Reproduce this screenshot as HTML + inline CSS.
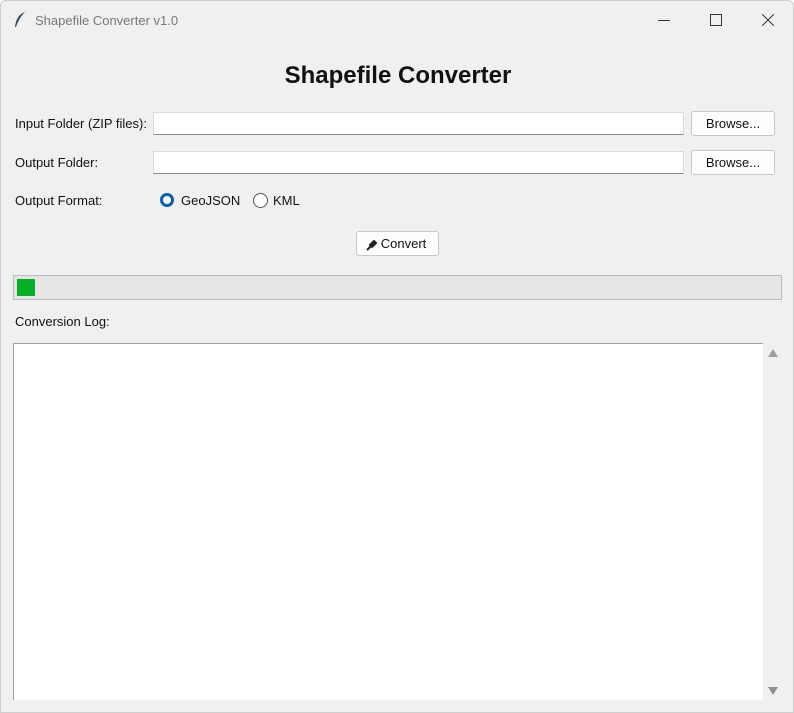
<!DOCTYPE html>
<html><head><meta charset="utf-8"><style>
body{margin:0;width:794px;height:713px;background:#fff;overflow:hidden;font-family:"Liberation Sans",sans-serif;}
.win{position:absolute;left:0;top:0;width:792px;height:711px;border:1px solid #cfcfcf;background:#f0f0f0;border-radius:6px 6px 0 0;}
.a{position:absolute;}
.lbl{font-size:13px;color:#111;}
.entry{background:#fff;border:1px solid #dcdcdc;border-bottom:1px solid #8a8a8a;height:21px;}
.btn{background:#fdfdfd;border:1px solid #c8c8c8;border-radius:3px;font-size:13px;color:#111;text-align:center;box-sizing:border-box;}
</style></head><body>
<div class="win">
<svg class="a" style="left:12px;top:10px" width="14" height="18" viewBox="0 0 14 18"><path d="M12 1 C6 3 3 8 2 16 L3 16 C5 10 8 5 12 1Z" fill="#3a4a5a"/></svg>
<div class="a" style="left:34px;top:12px;font-size:13px;color:#777">Shapefile Converter v1.0</div>
<div class="a" style="left:657px;top:19px;width:12px;height:1px;background:#333"></div>
<div class="a" style="left:709px;top:13px;width:10px;height:10px;border:1px solid #333"></div>
<svg class="a" style="left:761px;top:13px" width="12" height="12"><path d="M0 0L12 12M12 0L0 12" stroke="#333" stroke-width="1"/></svg>
<div class="a" style="left:0;top:61px;width:794px;text-align:center;font-size:24px;font-weight:bold;color:#111">Shapefile Converter</div>
<div class="a lbl" style="left:14px;top:115px">Input Folder (ZIP files):</div>
<div class="a entry" style="left:152px;top:111px;width:529px"></div>
<div class="a btn" style="left:690px;top:110px;width:84px;height:25px;line-height:23px">Browse...</div>
<div class="a lbl" style="left:14px;top:154px">Output Folder:</div>
<div class="a entry" style="left:152px;top:150px;width:529px"></div>
<div class="a btn" style="left:690px;top:149px;width:84px;height:25px;line-height:23px">Browse...</div>
<div class="a lbl" style="left:14px;top:192px">Output Format:</div>
<div class="a" style="left:159px;top:192px;width:8px;height:8px;border:3.5px solid #0a5fb4;border-radius:50%;background:#fff"></div>
<div class="a lbl" style="left:180px;top:192px">GeoJSON</div>
<div class="a" style="left:252px;top:192px;width:13px;height:13px;border:1px solid #555;border-radius:50%;background:#fff"></div>
<div class="a lbl" style="left:272px;top:192px">KML</div>
<div class="a btn" style="left:355px;top:230px;width:83px;height:25px;line-height:23px;padding-left:12px">Convert</div>
<svg class="a" style="left:365px;top:238px" width="12" height="12"><path d="M1 11L5 7M4 6L8 2L10 4L6 8Z" stroke="#222" stroke-width="2" fill="#222"/></svg>
<div class="a" style="left:12px;top:274px;width:767px;height:23px;border:1px solid #bcbcbc;background:#e6e6e6"></div>
<div class="a" style="left:16px;top:278px;width:18px;height:17px;background:#06b025"></div>
<div class="a lbl" style="left:14px;top:313px">Conversion Log:</div>
<div class="a" style="left:12px;top:342px;width:749px;height:356px;background:#fff;border-top:1px solid #a0a0a0;border-left:1px solid #a0a0a0"></div>
<div class="a" style="left:767px;top:348px;width:0;height:0;border-left:5px solid transparent;border-right:5px solid transparent;border-bottom:8px solid #a0a0a0"></div>
<div class="a" style="left:767px;top:686px;width:0;height:0;border-left:5px solid transparent;border-right:5px solid transparent;border-top:8px solid #909090"></div>
</div>
</body></html>
